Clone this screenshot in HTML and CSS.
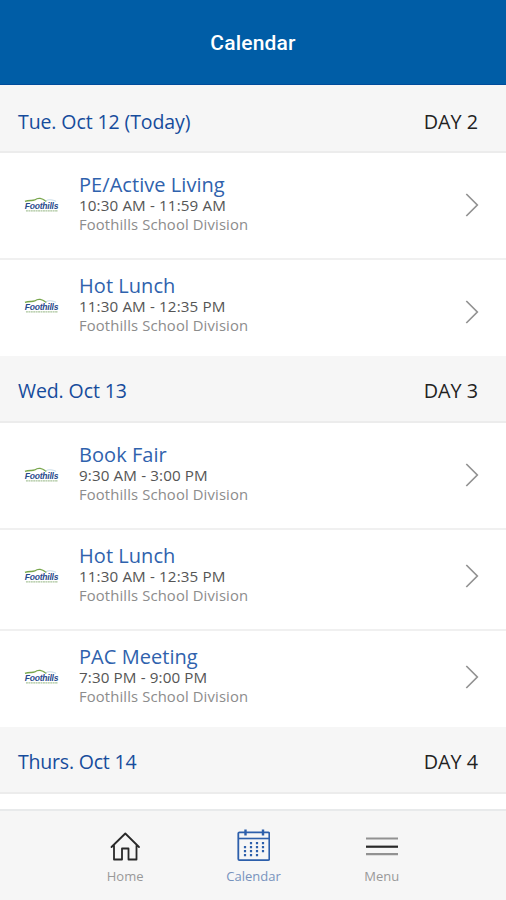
FILE: index.html
```
<!DOCTYPE html>
<html lang="en">
<head>
    <meta charset="UTF-8">
    <meta name="viewport" content="width=device-width, initial-scale=1.0">
    <title>Calendar</title>
    <link rel="stylesheet" href="styles.css">
</head>
<body>
    <!-- Shared icons -->
    <svg class="sprite" width="0" height="0">
        <symbol id="hills" viewBox="0 0 36 16">
            <path d="M1 4.2 C6 2.5 8 4 11 2.8 C15 0 18 1 23 4.2" fill="none" stroke="#78a64b" stroke-width="1.4"/>
            <path d="M22 3.8 C25 2 29 2.3 33 4.2" fill="none" stroke="#b5cfdf" stroke-width="0.8"/>
            <path d="M2 14 H35" stroke="#a9c49b" stroke-width="1.2" stroke-dasharray="2 0.5"/>
        </symbol>
        <symbol id="arrow" viewBox="0 0 14 24">
            <path d="M1.3 1 L12.3 12 L1.3 23" fill="none" stroke="#929292" stroke-width="1.7"/>
        </symbol>
    </svg>

    <header class="top-bar"><h1>Calendar</h1></header>

    <main class="schedule">
        <section class="day">
            <div class="day-header first-header">
                <h2 class="date">Tue. Oct 12 (Today)</h2>
                <span class="day-number">DAY 2</span>
            </div>
            <div class="event first">
                <div class="logo"><svg><use href="#hills"/></svg><span>Foothills</span></div>
                <div class="details">
                    <h3>PE/Active Living</h3>
                    <p class="time">10:30 AM - 11:59 AM</p>
                    <p class="school">Foothills School Division</p>
                </div>
                <svg class="arrow"><use href="#arrow"/></svg>
            </div>
            <div class="event last">
                <div class="logo"><svg><use href="#hills"/></svg><span>Foothills</span></div>
                <div class="details">
                    <h3>Hot Lunch</h3>
                    <p class="time">11:30 AM - 12:35 PM</p>
                    <p class="school">Foothills School Division</p>
                </div>
                <svg class="arrow arrow-low"><use href="#arrow"/></svg>
            </div>
        </section>

        <section class="day">
            <div class="day-header">
                <h2 class="date">Wed. Oct 13</h2>
                <span class="day-number">DAY 3</span>
            </div>
            <div class="event first">
                <div class="logo"><svg><use href="#hills"/></svg><span>Foothills</span></div>
                <div class="details">
                    <h3>Book Fair</h3>
                    <p class="time">9:30 AM - 3:00 PM</p>
                    <p class="school">Foothills School Division</p>
                </div>
                <svg class="arrow"><use href="#arrow"/></svg>
            </div>
            <div class="event">
                <div class="logo"><svg><use href="#hills"/></svg><span>Foothills</span></div>
                <div class="details">
                    <h3>Hot Lunch</h3>
                    <p class="time">11:30 AM - 12:35 PM</p>
                    <p class="school">Foothills School Division</p>
                </div>
                <svg class="arrow"><use href="#arrow"/></svg>
            </div>
            <div class="event last">
                <div class="logo"><svg><use href="#hills"/></svg><span>Foothills</span></div>
                <div class="details">
                    <h3>PAC Meeting</h3>
                    <p class="time">7:30 PM - 9:00 PM</p>
                    <p class="school">Foothills School Division</p>
                </div>
                <svg class="arrow"><use href="#arrow"/></svg>
            </div>
        </section>

        <section class="day">
            <div class="day-header">
                <h2 class="date tight">Thurs. Oct 14</h2>
                <span class="day-number">DAY 4</span>
            </div>
        </section>
    </main>

    <nav class="bottom-nav">
        <a class="nav-item">
            <svg width="34" height="34" viewBox="0 0 34 34" fill="none" stroke="#292929" stroke-width="1.8" stroke-linejoin="round" stroke-linecap="round">
                <path d="M3.5 18 L17.3 4.5 L31 18 M6 16 V30.5 H14 V19.5 H20.5 V30.5 H28.5 V16"/>
            </svg>
            <span>Home</span>
        </a>
        <a class="nav-item active">
            <svg width="34" height="34" viewBox="0 0 34 34" fill="none" stroke="#2d5fab">
                <rect x="2.3" y="3.4" width="31" height="27.8" rx="1.2" stroke-width="1.8"/>
                <path d="M2 9.5 H33" stroke-width="1.6"/>
                <path d="M9.5 0.5 V6.5 M27 0.5 V6.5" stroke-width="2.4"/>
                <path d="M15 13 V28 M21 13 V28 M27 13 V24 M9 17 V28" stroke-width="2.2" stroke-dasharray="2.2 1.8"/>
            </svg>
            <span>Calendar</span>
        </a>
        <a class="nav-item">
            <svg width="34" height="34" viewBox="0 0 34 34" fill="none" stroke-width="2.2">
                <path d="M1 9.5 H33 M1 25.2 H33" stroke="#929292"/>
                <path d="M1 17.7 H33" stroke="#292929"/>
            </svg>
            <span>Menu</span>
        </a>
    </nav>
</body>
</html>
```
FILE: styles.css
```
* {
    box-sizing: border-box;
}

body {
    margin: 0;
    height: 100vh;
    display: flex;
    flex-direction: column;
    overflow: hidden;
    background-color: #fff;
    font-family: "Open Sans", "Noto Sans", sans-serif;
}

h1, h2, h3, p {
    margin: 0;
    font-weight: 400;
    white-space: nowrap;
}

.sprite {
    position: absolute;
}

.top-bar {
    flex: none;
    height: 85px;
    padding-top: 2px;
    display: flex;
    justify-content: center;
    align-items: center;
    background-color: #005da6;
    border-bottom: 1px solid #004c9b;
    color: #fff;
}

.top-bar h1 {
    font-family: Roboto, sans-serif;
    font-size: 21px;
    font-weight: 500;
    letter-spacing: 0.2px;
}

.schedule {
    flex: 1;
    min-height: 0;
}

.day-header {
    height: 67px;
    padding: 4px 28px 0 18px;
    display: flex;
    justify-content: space-between;
    align-items: center;
    background-color: #f6f6f6;
    border-bottom: 2px solid #ececec;
}

.first-header {
    height: 68px;
    padding-top: 6px;
}

.date {
    color: #164c9c;
    font-size: 19.5px;
    letter-spacing: -0.1px;
}

.date.tight {
    letter-spacing: -0.2px;
}

.day-number {
    color: #222;
    font-size: 19.8px;
}

.event {
    height: 101px;
    padding: 13px 27px 0 24px;
    display: flex;
    border-bottom: 2px solid #f0f0f0;
}

.event.first {
    height: 107px;
    padding-top: 19px;
}

.event.last {
    height: 96px;
    border-bottom: none;
}

.logo {
    display: grid;
    width: 35px;
    height: 16px;
    margin: 25px 20px 0 0;
}

/* Name sits on top of the hills */
.logo svg,
.logo span {
    grid-area: 1 / 1;
    width: 35px;
    height: 16px;
}

.logo span {
    color: #27498b;
    font-family: "Liberation Sans", sans-serif;
    font-size: 8.5px;
    font-weight: bold;
    font-style: italic;
    letter-spacing: -0.2px;
    line-height: 18px;
    text-align: center;
}

.details {
    flex: 1;
}

.details h3 {
    color: #2f62ad;
    font-size: 20px;
    letter-spacing: 0.05px;
    line-height: 25px;
}

.time {
    color: #555;
    font-size: 15.2px;
    letter-spacing: 0.12px;
    line-height: 17px;
}

.school {
    color: #8c8c8c;
    font-size: 14.8px;
    letter-spacing: 0.13px;
    line-height: 20px;
}

.arrow {
    width: 14px;
    height: 24px;
    margin-top: 21px;
}

.arrow-low {
    margin-top: 27px;
}

.bottom-nav {
    flex: none;
    height: 91px;
    padding: 18px 60px 0 61px;
    display: flex;
    background-color: #f6f6f6;
    border-top: 2px solid #e8eaeb;
}

.nav-item {
    flex: 1;
    display: flex;
    flex-direction: column;
    align-items: center;
    color: #999;
    font-size: 13px;
    line-height: 18px;
}

.nav-item span {
    margin-top: 4px;
}

.nav-item.active {
    color: #7893bd;
}
```
